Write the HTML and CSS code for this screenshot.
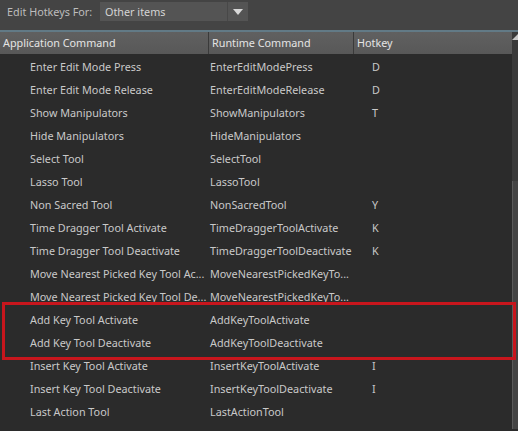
FILE: index.html
```html
<!DOCTYPE html>
<html>
<head>
<meta charset="utf-8">
<link rel="stylesheet" href="styles.css">
</head>
<body>
<div class="topbar">
  <span class="label">Edit Hotkeys For:</span>
  <div class="dropdown">
    <span class="dd-text">Other items</span>
    <span class="dd-btn"><svg width="10" height="6" viewBox="0 0 10 6"><path d="M0 0H10L5 6Z" fill="#d8d8d8"/></svg></span>
  </div>
</div>
<div class="table">
  <div class="main">
    <div class="header">
      <div class="hc c1">Application Command</div>
      <div class="hc c2">Runtime Command</div>
      <div class="hc c3">Hotkey</div>
    </div>
    <div class="rows">
      <div class="row"><span class="c1">Enter Edit Mode Press</span><span class="c2">EnterEditModePress</span><span class="c3">D</span></div>
      <div class="row"><span class="c1">Enter Edit Mode Release</span><span class="c2">EnterEditModeRelease</span><span class="c3">D</span></div>
      <div class="row"><span class="c1">Show Manipulators</span><span class="c2">ShowManipulators</span><span class="c3">T</span></div>
      <div class="row"><span class="c1">Hide Manipulators</span><span class="c2">HideManipulators</span><span class="c3"></span></div>
      <div class="row"><span class="c1">Select Tool</span><span class="c2">SelectTool</span><span class="c3"></span></div>
      <div class="row"><span class="c1">Lasso Tool</span><span class="c2">LassoTool</span><span class="c3"></span></div>
      <div class="row"><span class="c1">Non Sacred Tool</span><span class="c2">NonSacredTool</span><span class="c3">Y</span></div>
      <div class="row"><span class="c1">Time Dragger Tool Activate</span><span class="c2">TimeDraggerToolActivate</span><span class="c3">K</span></div>
      <div class="row"><span class="c1">Time Dragger Tool Deactivate</span><span class="c2">TimeDraggerToolDeactivate</span><span class="c3">K</span></div>
      <div class="row"><span class="c1">Move Nearest Picked Key Tool Ac...</span><span class="c2">MoveNearestPickedKeyTo...</span><span class="c3"></span></div>
      <div class="row"><span class="c1">Move Nearest Picked Key Tool De...</span><span class="c2">MoveNearestPickedKeyTo...</span><span class="c3"></span></div>
      <div class="row"><span class="c1">Add Key Tool Activate</span><span class="c2">AddKeyToolActivate</span><span class="c3"></span></div>
      <div class="row"><span class="c1">Add Key Tool Deactivate</span><span class="c2">AddKeyToolDeactivate</span><span class="c3"></span></div>
      <div class="row"><span class="c1">Insert Key Tool Activate</span><span class="c2">InsertKeyToolActivate</span><span class="c3">I</span></div>
      <div class="row"><span class="c1">Insert Key Tool Deactivate</span><span class="c2">InsertKeyToolDeactivate</span><span class="c3">I</span></div>
      <div class="row"><span class="c1">Last Action Tool</span><span class="c2">LastActionTool</span><span class="c3"></span></div>
    </div>
  </div>
  <div class="scroll">
    <div class="arrow"><svg width="6" height="6" viewBox="0 0 6 6"><path d="M6 0V6H0Z" fill="#c8c8c8"/></svg></div>
    <div class="track"></div>
    <div class="thumb"></div>
  </div>
</div>
<div class="highlight"></div>
</body>
</html>
```
FILE: styles.css
```css
html, body {
  margin: 0;
  padding: 0;
  width: 518px;
  height: 431px;
  overflow: hidden;
  background: #2b2b2b;
  font-family: "Noto Sans", "Open Sans", sans-serif;
  font-size: 10.8px;
  color: #c9c9c9;
}
.topbar {
  height: 32px;
  background: #444444;
  display: flex;
  align-items: flex-start;
  padding-left: 7px;
  box-sizing: border-box;
  border-bottom: 2px solid #627a86;
}
.label {
  height: 23px;
  line-height: 23px;
  width: 93px;
  color: #bdbdbd;
}
.dropdown {
  margin-top: 2px;
  width: 148px;
  height: 19px;
  background: #545454;
  display: flex;
  align-items: center;
}
.dd-text {
  flex: 1;
  padding-left: 5px;
  color: #d4d4d4;
}
.dd-btn {
  width: 20px;
  height: 19px;
  border-left: 1px solid #484848;
  display: flex;
  align-items: center;
  justify-content: center;
}
.table {
  display: flex;
  height: 397px;
}
.main {
  width: 512px;
}
.header {
  display: flex;
  height: 22px;
  background: linear-gradient(#606060, #585858);
  color: #e4e4e4;
}
.hc {
  line-height: 22px;
  padding-left: 3px;
  box-sizing: border-box;
  border-right: 1px solid #3a3a3a;
}
.header .c1 { width: 209px; }
.header .c2 { width: 145px; }
.header .c3 { flex: 1; border-right: none; }
.rows {
  padding-top: 1px;
}
.row {
  display: flex;
  height: 23px;
  line-height: 23px;
  white-space: nowrap;
}
.row .c1 { width: 209px; padding-left: 30px; box-sizing: border-box; }
.row .c2 { width: 163px; padding-left: 1px; box-sizing: border-box; }
.row .c3 { flex: 1; }
.scroll {
  width: 6px;
  display: flex;
  flex-direction: column;
  background: #3a3a3a;
}
.arrow {
  height: 8px;
  display: flex;
  align-items: flex-end;
  background: #3a3a3a;
}
.track {
  height: 141px;
}
.thumb {
  flex: 1;
  background: #444444;
  border-left: 1px solid #5a5a5a;
}
.highlight {
  position: absolute;
  left: 2px;
  top: 302px;
  width: 508px;
  height: 52px;
  border: 3px solid #c8161d;
}
```
